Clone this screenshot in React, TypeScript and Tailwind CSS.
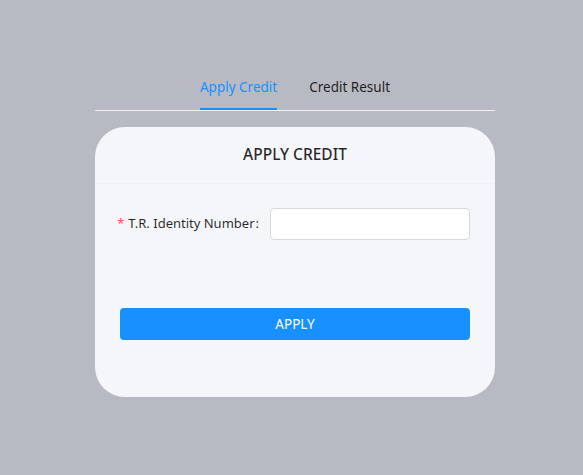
export default function App() {
  return (
    <div className="min-h-screen bg-[#b7bac2] flex flex-col items-center pt-[64px] pl-[7px] font-['Noto_Sans',sans-serif] text-[13.5px] text-[rgba(0,0,0,0.85)]">
      <div className="w-[400px]">
        {/* Tabs */}
        <div className="flex justify-center gap-8 border-b border-[#f0f0f0] mb-4">
          <div className="relative py-3 leading-[22px] text-[#1890ff]">
            Apply Credit
            <div className="absolute left-0 right-0 bottom-0 h-[2px] bg-[#1890ff]" />
          </div>
          <div className="py-3 leading-[22px]">Credit Result</div>
        </div>

        {/* Card */}
        <div className="bg-[#f5f6fa] rounded-[30px]">
          <div className="h-[57px] flex items-center justify-center border-b border-[#eef0f3] text-[15.5px] font-medium">
            APPLY CREDIT
          </div>
          <div className="px-[25px] pt-6 pb-[57px]">
            <div className="flex items-center">
              <label className="flex-1 min-w-0 flex justify-end items-center pr-2 whitespace-nowrap text-[13px]">
                <span className="text-[#ff4d4f] mr-1">*</span>
                T.R. Identity Number
                <span className="ml-[1px] mr-[3px]">:</span>
              </label>
              <input className="shrink-0 w-[200px] h-8 bg-white border border-[#d9d9d9] rounded-sm px-3 outline-none" />
            </div>
            <button className="mt-[68px] w-full h-8 bg-[#1890ff] text-white rounded-sm leading-[22px]">
              APPLY
            </button>
          </div>
        </div>
      </div>
    </div>
  )
}
